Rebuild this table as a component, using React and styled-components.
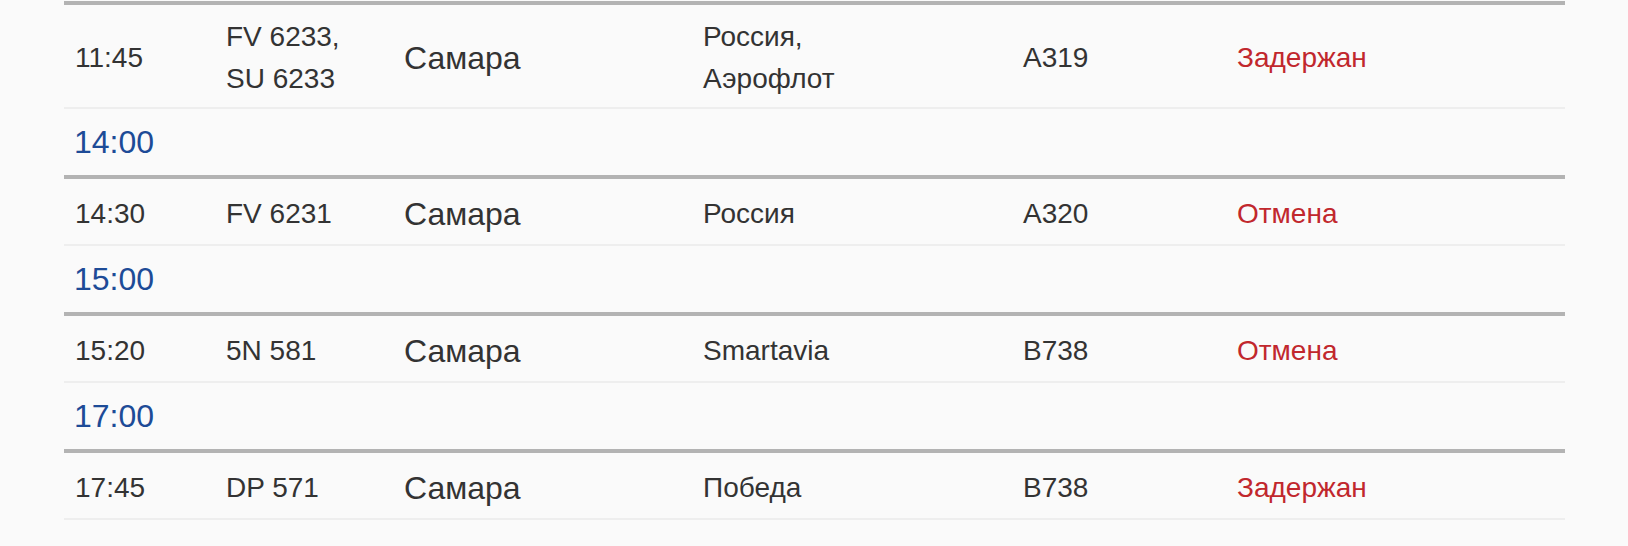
import React from "react";
import styled, { createGlobalStyle } from "styled-components";

const flights = [
  {
    hour: null,
    time: "11:45",
    codes: ["FV 6233,", "SU 6233"],
    city: "Самара",
    airline: ["Россия,", "Аэрофлот"],
    plane: "A319",
    status: "Задержан",
  },
  { hour: "14:00", time: "14:30", codes: ["FV 6231"], city: "Самара", airline: ["Россия"], plane: "A320", status: "Отмена" },
  { hour: "15:00", time: "15:20", codes: ["5N 581"], city: "Самара", airline: ["Smartavia"], plane: "B738", status: "Отмена" },
  { hour: "17:00", time: "17:45", codes: ["DP 571"], city: "Самара", airline: ["Победа"], plane: "B738", status: "Задержан" },
];

function App() {
  return (
    <>
      <GlobalStyle />
      <Board>
        {flights.map((f) => (
          <React.Fragment key={f.time}>
            {f.hour && (
              <HourRow>
                <HourLabel>{f.hour}</HourLabel>
              </HourRow>
            )}
            <FlightRow>
              <Cell>{f.time}</Cell>
              <Cell>
                {f.codes.map((c) => (
                  <div key={c}>{c}</div>
                ))}
              </Cell>
              <City>{f.city}</City>
              <Cell>
                {f.airline.map((a) => (
                  <div key={a}>{a}</div>
                ))}
              </Cell>
              <Cell>{f.plane}</Cell>
              <Status>{f.status}</Status>
            </FlightRow>
          </React.Fragment>
        ))}
      </Board>
    </>
  );
}

export default App;

const GlobalStyle = createGlobalStyle`
  body {
    margin: 0;
    background: #fafafa;
    font-family: "Liberation Sans", Arial, sans-serif;
    color: #333333;
  }
`;

const Board = styled.div`
  width: 1501px;
  margin: 1px 0 0 64px;
`;

const FlightRow = styled.div`
  display: grid;
  grid-template-columns: 151px 178px 299px 320px 214px 1fr;
  align-items: center;
  border-top: 4px solid #b3b3b3;
  border-bottom: 2px solid #eeeeee;
  padding: 11px 0 7px;
  min-height: 47px;
`;

const Cell = styled.div`
  padding: 0 11px;
  font-size: 28px;
  line-height: 42px;
`;

const City = styled(Cell)`
  font-size: 32px;
`;

const Status = styled(Cell)`
  color: #c1272d;
`;

const HourRow = styled.div`
  display: flex;
  align-items: center;
  height: 66px;
  padding: 0 10px;
`;

const HourLabel = styled.span`
  font-size: 32px;
  color: #1d4b97;
`;
